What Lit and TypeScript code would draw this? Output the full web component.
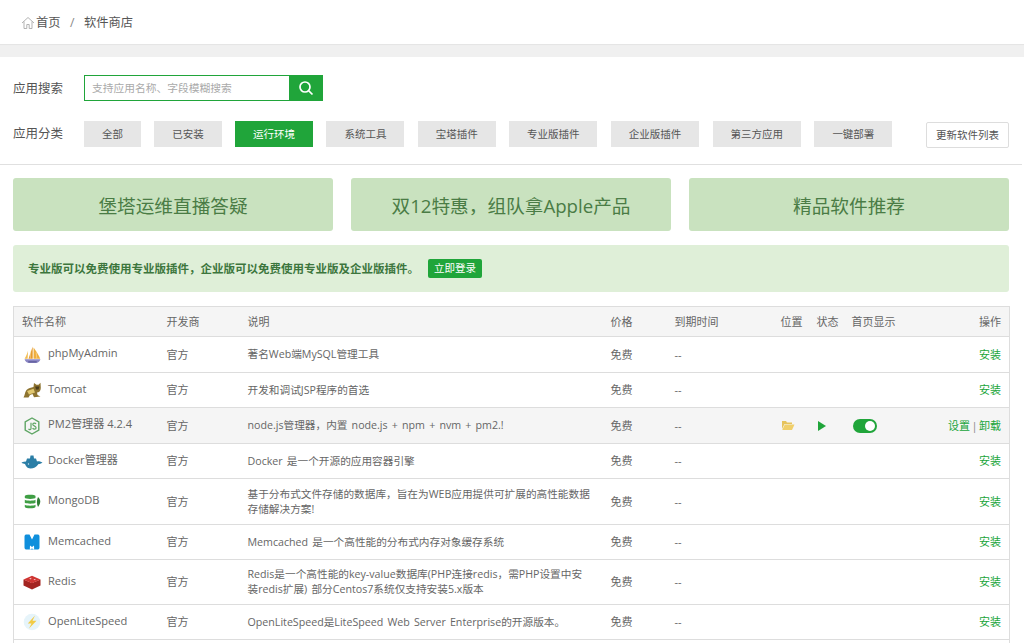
import { LitElement, css, html, svg } from 'lit';
import { customElement } from 'lit/decorators.js';

const icons: Record<string, unknown> = {
  pma: svg`<svg viewBox="0 0 16 17" width="17" height="18">
    <path d="M8.200 .5 L4.200 12 H8.200Z" fill="#e59a2c"/>
    <path d="M9 1.500 C11.500 5 13.700 8.500 15.300 12 H9Z" fill="#efae3e"/>
    <path d="M3.800 4.500 C3 7.500 1.800 10 .5 12 H3.400Z" fill="#f2bd52"/>
    <path d="M6.300 4.500 L5.900 12 M11.500 6 L12 12" stroke="#fbe6b8" stroke-width=".5"/>
    <path d="M.5 12.500 H15.500 C15 14.500 13 16 11 16 H5 C3 16 1 14.500 .5 12.500Z" fill="#8a86c4"/>
    <path d="M4 15 H12" stroke="#55528f" stroke-width="1"/>
  </svg>`,
  tomcat: svg`<svg viewBox="0 0 18 16" width="18" height="16">
    <path d="M.5 15.500 C2 13.500 1.500 10.500 3.500 8 C5.500 6 8 5.500 10.500 5 L11 1 L13.500 2.800 L15.500 2.800 L17.500 .8 L17.800 6 C17.800 9 15.800 10.500 14 10.500 L14.500 13 L17.500 14.500 L11 15.200 L9.500 12 L7 13 L5.500 15.500 H.5Z" fill="#8d7330"/>
    <path d="M4 9 L10.500 6.800 L12 10.500 L6 12.500Z" fill="#e0c76f"/>
    <path d="M12.200 4.500 L16.500 4.500 L15.500 7.500 L13 7.500Z" fill="#4b3d1c"/>
  </svg>`,
  node: svg`<svg viewBox="0 0 16 18" width="16" height="18">
    <path d="M8 1 L14.800 4.800 V13.200 L8 17 L1.200 13.200 V4.800Z" fill="none" stroke="#5fa665" stroke-width="1.400" stroke-linejoin="round"/>
    <path d="M7 5.800 V11.500 C7 13 5.100 13 4.600 11.800" fill="none" stroke="#5fa665" stroke-width="1.200"/>
    <path d="M12 7 C11.200 5.600 8.800 5.800 8.800 7.400 C8.800 9 12.100 8.700 12.100 10.800 C12.100 12.500 9.500 12.600 8.600 11.100" fill="none" stroke="#5fa665" stroke-width="1.200"/>
  </svg>`,
  docker: svg`<svg viewBox="0 0 22 15" width="22" height="15">
    <path d="M.5 8.500 C2 8 3.500 7.500 5 7.500 L6 4.500 H9 L9.500 1.500 H12.500 L13 4.500 H15 L16 7.500 C17.500 7 19 7.500 21.500 8.500 C20 9.800 18.500 10 17.500 10 C15.500 13 12.500 14.500 9.500 14.500 C6 14.500 4.500 11.500 4 10 C2.800 9.800 1.500 9.500 .5 8.500Z" fill="#2b7ea6"/>
    <circle cx="7.500" cy="10" r=".7" fill="#d5e8f0"/>
  </svg>`,
  mongo: svg`<svg viewBox="0 0 17 15" width="17" height="15">
    <path d="M.8 2 C.8 .3 11.500 .3 11.500 2 V3.800 C11.500 5.300 .8 5.300 .8 3.800Z" fill="#3f9e44"/>
    <path d="M.8 5.800 C3 7 9.500 7 11.500 5.800 V8.800 C9.500 10 3 10 .8 8.800Z" fill="#3f9e44"/>
    <path d="M.8 10.800 C3 12 9.500 12 11.500 10.800 V12.800 C11.500 14.800 .8 14.800 .8 12.800Z" fill="#3f9e44"/>
    <path d="M14 3 C16.500 5 17.500 8.500 14 13 C12.500 10 12.500 6 14 3Z" fill="#2f7d35"/>
  </svg>`,
  memcached: svg`<svg viewBox="0 0 16 16" width="16" height="16">
    <path d="M.5 2.500 C.5 1 1.500 .5 2.500 .5 H5.500 L8 5.500 L10.500 .5 H13.500 C14.500 .5 15.500 1 15.500 2.500 V13.500 C15.500 15 14.500 15.500 13.500 15.500 H2.500 C1.500 15.500 .5 15 .5 13.500Z" fill="#0f8fdc"/>
    <path d="M5.800 15.500 L6 11.500 L8 13 L10 11.500 L10.200 15.500 H9.200 L8.800 14.500 L8 15 L7.200 14.500 L6.800 15.500Z" fill="#fff"/>
  </svg>`,
  redis: svg`<svg viewBox="0 0 18 15" width="18" height="15">
    <path d="M.5 4.500 L9 8 L17.500 4.500 V10.500 L9 14.500 L.5 10.500Z" fill="#a32421"/>
    <path d="M.5 4.500 L9 .8 L17.500 4.500 L9 8.200Z" fill="#cf3532"/>
    <path d="M6 3.500 L8.500 2.800 L8 4.500Z M10.500 4 L13 4 L11.500 5.200Z" fill="#f3c3c0"/>
  </svg>`,
  ols: svg`<svg viewBox="0 0 18 18" width="18" height="18">
    <circle cx="9" cy="9" r="8.300" fill="#e6f4fa"/>
    <path d="M12 2.500 L4.800 10.500 H8.500 L6 15.500 L13.500 7.800 H9.500Z" fill="#f2cb45"/>
  </svg>`,
};

interface Row {
  icon: string;
  name: string;
  desc: unknown;
  running?: boolean;
  h: number;
}

const rows: Row[] = [
  { icon: 'pma', name: 'phpMyAdmin', desc: '著名Web端MySQL管理工具', h: 36 },
  { icon: 'tomcat', name: 'Tomcat', desc: '开发和调试JSP程序的首选', h: 35 },
  { icon: 'node', name: 'PM2管理器 4.2.4', desc: 'node.js管理器，内置 node.js + npm + nvm + pm2.!', running: true, h: 36 },
  { icon: 'docker', name: 'Docker管理器', desc: 'Docker 是一个开源的应用容器引擎', h: 35 },
  {
    icon: 'mongo',
    name: 'MongoDB',
    desc: html`基于分布式文件存储的数据库，旨在为WEB应用提供可扩展的高性能数据<br />存储解决方案!`,
    h: 46,
  },
  { icon: 'memcached', name: 'Memcached', desc: 'Memcached 是一个高性能的分布式内存对象缓存系统', h: 35 },
  {
    icon: 'redis',
    name: 'Redis',
    desc: html`Redis是一个高性能的key-value数据库(PHP连接redis，需PHP设置中安<br />装redis扩展) 部分Centos7系统仅支持安装5.x版本`,
    h: 45,
  },
  { icon: 'ols', name: 'OpenLiteSpeed', desc: 'OpenLiteSpeed是LiteSpeed Web Server Enterprise的开源版本。', h: 35 },
];

const categories = ['全部', '已安装', '运行环境', '系统工具', '宝塔插件', '专业版插件', '企业版插件', '第三方应用', '一键部署'];

@customElement('app-root')
class AppRoot extends LitElement {
  static styles = css`
    :host {
      display: block;
      width: 1024px;
      height: 643px;
      overflow: hidden;
      background: #fff;
      color: #666;
      font: 12px/18px 'Open Sans', 'Noto Sans CJK SC', sans-serif;
    }

    .crumbs {
      height: 44px;
      display: flex;
      align-items: center;
      padding: 1px 0 0 21px;
      font-size: 12.250px;
      color: #555;
      box-sizing: border-box;
    }
    .crumbs svg {
      margin-right: 1px;
    }
    .crumbs .sep {
      margin: 0 9.500px;
      color: #888;
    }

    .band {
      height: 13px;
      background: #f0f0f0;
      box-shadow: inset 0 2px 1px -1px #e4e4e4;
    }

    .filters {
      height: 108px;
      box-sizing: border-box;
      margin-right: 2px;
      border-bottom: 1px solid #e0e0e0;
      padding: 18px 13px 0 13px;
    }
    .line {
      display: flex;
      align-items: center;
    }
    .line label {
      width: 71px;
      font-size: 12.500px;
      color: #555;
    }
    .search {
      height: 26px;
      margin-bottom: 19px;
    }
    .search label {
      padding-top: 1px;
    }
    .search input {
      width: 205px;
      height: 26px;
      box-sizing: border-box;
      border: 1px solid #20a53a;
      border-right: 0;
      outline: 0;
      padding: 0 7px;
      font: inherit;
      font-size: 10.750px;
    }
    .search input::placeholder {
      color: #aaa;
    }
    .search button {
      width: 34px;
      height: 26px;
      border: 0;
      padding: 0;
      background: #20a53a;
      display: flex;
      align-items: center;
      justify-content: center;
    }
    .cats {
      display: flex;
      gap: 13.300px;
    }
    .cat {
      height: 26px;
      padding: 0 18px;
      background: #e6e6e6;
      line-height: 26px;
      font-size: 10.500px;
      color: #555;
    }
    .cat.on {
      background: #20a53a;
      color: #fff;
    }
    .refresh {
      margin: 2px 0 0 auto;
      width: 83px;
      height: 26px;
      box-sizing: border-box;
      border: 1px solid #ddd;
      border-radius: 2px;
      background: #fff;
      font: inherit;
      font-size: 10.500px;
      color: #555;
      padding: 0;
    }

    .main {
      padding: 13px 15px 0 13px;
    }
    .banners {
      display: flex;
      gap: 18px;
    }
    .banner {
      flex: 1;
      height: 53px;
      line-height: 55px;
      text-align: center;
      background: #c9e2bf;
      border-radius: 3px;
      color: #4a7c45;
      font-size: 18.670px;
    }
    .alert {
      margin-top: 14px;
      height: 47px;
      display: flex;
      align-items: center;
      padding-left: 15px;
      background: #dfefd8;
      border-radius: 3px;
      color: #3c763d;
      font-size: 11.500px;
      font-weight: 700;
    }
    .login {
      margin-left: 9px;
      height: 19px;
      padding: 0 6px;
      line-height: 19px;
      border-radius: 2px;
      background: #20a53a;
      color: #fff;
      font-size: 10.500px;
      font-weight: 400;
    }

    table {
      margin-top: 14px;
      width: 996px;
      table-layout: fixed;
      border-collapse: collapse;
      border: 1px solid #ddd;
    }
    th,
    td {
      padding: 0 8px;
      text-align: left;
      font-weight: 400;
      font-size: 11px;
      white-space: nowrap;
      box-sizing: border-box;
    }
    th {
      height: 30px;
      background: #f5f5f5;
    }
    tbody tr {
      border-top: 1px solid #ddd;
    }
    tr.running {
      background: #f5f5f5;
    }
    .right {
      text-align: right;
    }
    td.desc {
      font-size: 10.670px;
      line-height: 15px;
      word-spacing: 1.400px;
    }
    .soft {
      display: flex;
      align-items: center;
      font-size: 11.100px;
    }
    .logo {
      width: 20px;
      flex: none;
      display: flex;
      justify-content: center;
      margin-right: 6px;
    }
    .logo svg {
      flex: none;
    }
    .soft span {
      margin-top: -3px;
    }
    .bar {
      margin: 0 1.500px;
      color: #888;
    }
    a {
      color: #20a53a;
      text-decoration: none;
    }
    .sw {
      display: block;
      width: 24px;
      height: 14px;
      margin-left: 1px;
      border-radius: 7px;
      background: #20a53a;
      position: relative;
    }
    .sw::after {
      content: '';
      position: absolute;
      right: 2px;
      top: 2px;
      width: 10px;
      height: 10px;
      border-radius: 50%;
      background: #fff;
    }
  `;

  render() {
    return html`
      <nav class="crumbs">
        <svg viewBox="0 0 14 14" width="14" height="14" fill="none" stroke="#aaa" stroke-width=".9">
          <path d="M1 7 L7 1.500 L13 7 M3 5.500 V12.500 H5.800 V8.500 H8.200 V12.500 H11 V5.500" />
        </svg>
        <span>首页</span><span class="sep">/</span><span>软件商店</span>
      </nav>
      <div class="band"></div>
      <section class="filters">
        <div class="line search">
          <label>应用搜索</label>
          <input placeholder="支持应用名称、字段模糊搜索" />
          <button>
            <svg viewBox="0 0 16 16" width="16" height="16" fill="none" stroke="#fff" stroke-width="1.700">
              <circle cx="7" cy="7" r="5" />
              <path d="M10.800 10.800 L14.500 14.500" />
            </svg>
          </button>
        </div>
        <div class="line">
          <label>应用分类</label>
          <div class="cats">
            ${categories.map((c) => html`<div class="cat ${c === '运行环境' ? 'on' : ''}">${c}</div>`)}
          </div>
          <button class="refresh">更新软件列表</button>
        </div>
      </section>
      <div class="main">
        <div class="banners">
          <div class="banner">堡塔运维直播答疑</div>
          <div class="banner">双12特惠，组队拿Apple产品</div>
          <div class="banner">精品软件推荐</div>
        </div>
        <div class="alert">
          专业版可以免费使用专业版插件，企业版可以免费使用专业版及企业版插件。<span class="login">立即登录</span>
        </div>
        <table>
          <colgroup>
            <col style="width:145px" />
            <col style="width:81px" />
            <col style="width:363px" />
            <col style="width:64px" />
            <col style="width:106px" />
            <col style="width:36px" />
            <col style="width:35px" />
            <col style="width:60px" />
            <col style="width:106px" />
          </colgroup>
          <thead>
            <tr>
              <th>软件名称</th>
              <th>开发商</th>
              <th>说明</th>
              <th>价格</th>
              <th>到期时间</th>
              <th>位置</th>
              <th>状态</th>
              <th>首页显示</th>
              <th class="right">操作</th>
            </tr>
          </thead>
          <tbody>
            ${rows.map(
              (r) => html`<tr class="${r.running ? 'running' : ''}" style="height:${r.h}px">
                <td>
                  <div class="soft"><div class="logo">${icons[r.icon]}</div><span>${r.name}</span></div>
                </td>
                <td>官方</td>
                <td class="desc">${r.desc}</td>
                <td>免费</td>
                <td>--</td>
                <td>
                  ${r.running
                    ? html`<svg viewBox="0 0 14 11" width="14" height="11" style="display:block">
                        <path d="M1 1 H5 L6 2.500 H11 V4 H3.500 L1 9Z" fill="#e6c35c" />
                        <path d="M3.800 4.500 H13.500 L11 10 H1.200Z" fill="#f0cf6a" />
                      </svg>`
                    : ''}
                </td>
                <td>
                  ${r.running
                    ? html`<svg viewBox="0 0 10 10" width="10" height="10" style="display:block">
                        <path d="M1 0 L9 5 L1 10Z" fill="#20a53a" />
                      </svg>`
                    : ''}
                </td>
                <td>${r.running ? html`<span class="sw"></span>` : ''}</td>
                <td class="right">
                  ${r.running ? html`<a>设置</a><span class="bar">|</span><a>卸载</a>` : html`<a>安装</a>`}
                </td>
              </tr>`
            )}
            <tr style="height:36px"><td colspan="9"></td></tr>
          </tbody>
        </table>
      </div>
    `;
  }
}

export default AppRoot;

declare global {
  interface HTMLElementTagNameMap {
    'app-root': AppRoot;
  }
}
